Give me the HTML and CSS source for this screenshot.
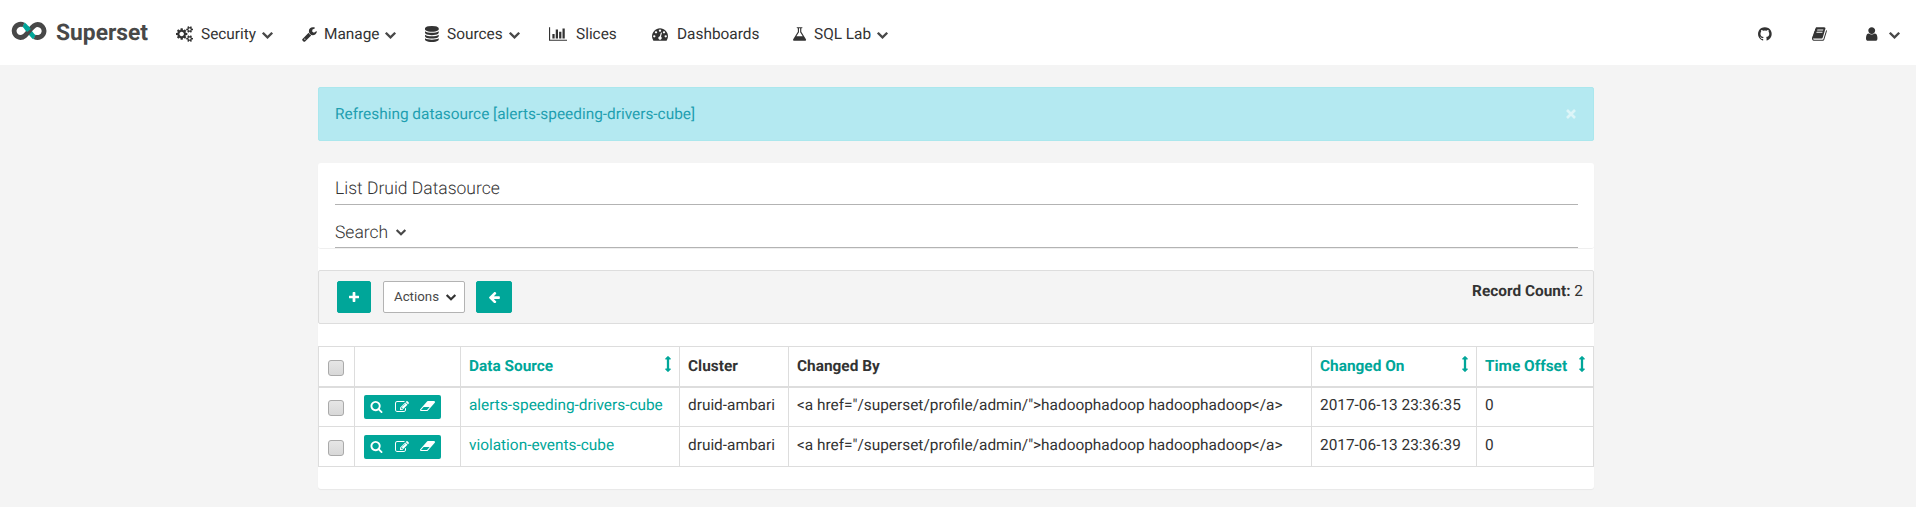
FILE: index.html
```
<!DOCTYPE html>
<html lang="en">
<head>
<meta charset="utf-8">
<title>Superset</title>
<link rel="stylesheet" href="styles.css">
</head>
<body>
<svg class="sprite" aria-hidden="true">
<symbol id="cogs" viewBox="0 0 1920 1792"><path d="M896 896q0-106-75-181t-181-75-181 75-75 181 75 181 181 75 181-75 75-181zm768 512q0-52-38-90t-90-38-90 38-38 90q0 53 37.500 90.500t90.500 37.500 90.500-37.500 37.500-90.500zm0-1024q0-52-38-90t-90-38-90 38-38 90q0 53 37.500 90.500t90.500 37.500 90.500-37.500 37.500-90.500zm-384 421v185q0 10-7 19.500t-16 10.500l-155 24q-11 35-32 76 34 48 90 115 7 11 7 20 0 12-7 19-23 30-82.500 89.500t-78.500 59.500q-11 0-21-7l-115-90q-37 19-77 31-11 108-23 155-7 24-30 24h-186q-11 0-20-7.500t-10-17.500l-23-153q-34-10-75-31l-118 89q-7 7-20 7-11 0-21-8-144-133-144-160 0-9 7-19 10-14 41-53t47-61q-23-44-35-82l-152-24q-10-1-17-9.500t-7-19.500v-185q0-10 7-19.500t16-10.500l155-24q11-35 32-76-34-48-90-115-7-11-7-20 0-12 7-20 22-30 82-89t79-59q11 0 21 7l115 90q34-18 77-32 11-108 23-154 7-24 30-24h186q11 0 20 7.500t10 17.500l23 153q34 10 75 31l118-89q8-7 20-7 11 0 21 8 144 133 144 160 0 8-7 19-12 16-42 54t-45 60q23 48 34 82l152 23q10 2 17 10.500t7 19.500zm640 533v140q0 16-149 31-12 27-30 52 51 113 51 138 0 4-4 7-122 71-124 71-8 0-46-47t-52-68q-20 2-30 2t-30-2q-14 21-52 68t-46 47q-2 0-124-71-4-3-4-7 0-25 51-138-18-25-30-52-149-15-149-31v-140q0-16 149-31 13-29 30-52-51-113-51-138 0-4 4-7 4-2 35-20t59-34 30-16q8 0 46 46.500t52 67.500q20-2 30-2t30 2q51-71 92-112l6-2q4 0 124 70 4 3 4 7 0 25-51 138 17 23 30 52 149 15 149 31zm0-1024v140q0 16-149 31-12 27-30 52 51 113 51 138 0 4-4 7-122 71-124 71-8 0-46-47t-52-68q-20 2-30 2t-30-2q-14 21-52 68t-46 47q-2 0-124-71-4-3-4-7 0-25 51-138-18-25-30-52-149-15-149-31v-140q0-16 149-31 13-29 30-52-51-113-51-138 0-4 4-7 4-2 35-20t59-34 30-16q8 0 46 46.500t52 67.500q20-2 30-2t30 2q51-71 92-112l6-2q4 0 124 70 4 3 4 7 0 25-51 138 17 23 30 52 149 15 149 31z"/></symbol>
<symbol id="wrench" viewBox="64 0 1792 1792"><path d="M448 1472q0-26-19-45t-45-19-45 19-19 45 19 45 45 19 45-19 19-45zm644-420l-682 682q-37 37-90 37-52 0-91-37l-106-108q-38-36-38-90 0-53 38-91l681-681q39 98 114.500 173.500t173.500 114.500zm634-435q0 39-23 106-47 134-164.500 217.500t-258.500 83.500q-185 0-316.500-131.500t-131.500-316.500 131.500-316.500 316.500-131.500q58 0 121.500 16.500t107.500 46.500q16 11 16 28t-16 28l-293 169v224l193 107q5-3 79-48.500t135.500-81 70.500-35.500q15 0 23.500 10t8.500 25z"/></symbol>
<symbol id="database" viewBox="128 0 1792 1792"><path d="M896 768q237 0 443-43t325-127v170q0 69-103 128t-280 93.500-385 34.500-385-34.500-280-93.500-103-128v-170q119 84 325 127t443 43zm0 768q237 0 443-43t325-127v170q0 69-103 128t-280 93.500-385 34.500-385-34.500-280-93.500-103-128v-170q119 84 325 127t443 43zm0-384q237 0 443-43t325-127v170q0 69-103 128t-280 93.500-385 34.500-385-34.500-280-93.500-103-128v-170q119 84 325 127t443 43zm0-1152q208 0 385 34.500t280 93.500 103 128v128q0 69-103 128t-280 93.500-385 34.500-385-34.500-280-93.500-103-128v-128q0-69 103-128t280-93.500 385-34.500z"/></symbol>
<symbol id="chart" viewBox="0 0 2048 1792"><path d="M640 896v512h-256v-512h256zm384-512v1024h-256v-1024h256zm1024 1152v128h-2048v-1536h128v1408h1920zm-640-896v768h-256v-768h256zm384-384v1152h-256v-1152h256z"/></symbol>
<symbol id="gauge" viewBox="0 0 1792 1792"><path d="M384 1152q0-53-37.500-90.500t-90.500-37.500-90.500 37.500-37.500 90.500 37.500 90.500 90.500 37.500 90.500-37.500 37.500-90.500zm192-448q0-53-37.500-90.500t-90.500-37.500-90.500 37.500-37.500 90.500 37.500 90.500 90.500 37.500 90.500-37.500 37.500-90.500zm428 481l101-382q6-26-7.500-48.500t-38.500-29.500-48 6.500-30 39.500l-101 382q-60 5-107 43.500t-63 98.500q-20 77 20 146t117 89 146-20 89-117q16-60-6-117t-72-91zm660-33q0-53-37.500-90.500t-90.500-37.500-90.500 37.500-37.500 90.500 37.500 90.500 90.500 37.500 90.500-37.500 37.500-90.500zm-640-640q0-53-37.500-90.500t-90.500-37.500-90.500 37.500-37.500 90.500 37.500 90.500 90.500 37.500 90.500-37.500 37.500-90.500zm448 192q0-53-37.500-90.500t-90.500-37.500-90.500 37.500-37.500 90.500 37.500 90.500 90.500 37.500 90.500-37.500 37.500-90.500zm320 448q0 261-141 483-19 29-54 29h-1402q-35 0-54-29-141-221-141-483 0-182 71-348t191-286 286-191 348-71 348 71 286 191 191 286 71 348z"/></symbol>
<symbol id="flask" viewBox="160 0 1792 1792"><path d="M1591 1448q56 89 21.500 152.500t-140.500 63.500h-1152q-106 0-140.500-63.500t21.500-152.500l503-793v-399h-64q-26 0-45-19t-19-45 19-45 45-19h512q26 0 45 19t19 45-19 45-45 19h-64v399zm-779-725l-272 429h712l-272-429-20-31v-436h-128v436z"/></symbol>
<symbol id="github" viewBox="128 0 1792 1792"><path d="M896 128q209 0 385.500 103t279.500 279.500 103 385.500q0 251-146.500 451.500t-378.500 277.500q-27 5-40-7t-13-30q0-3 .5-76.500t.5-134.500q0-97-52-142 57-6 102.500-18t94-39 81-66.500 53-105 20.500-150.500q0-119-79-206 37-91-8-204-28-9-81 11t-92 44l-38 24q-93-26-192-26t-192 26q-16-11-42.500-27t-83.500-38.500-85-13.500q-45 113-8 204-79 87-79 206 0 85 20.500 150t52.500 105 80.500 67 94 39 102.500 18q-39 36-49 103-21 10-45 15t-57 5-65.500-21.500-55.500-62.500q-19-32-48.500-52t-49.500-24l-20-3q-21 0-29 4.500t-5 11.500 9 14 13 12l7 5q22 10 43.500 38t31.500 51l10 23q13 38 44 61.500t67 30 69.500 7 55.500-3.500l23-4q0 38 .5 88.500t.5 54.500q0 18-13 30t-40 7q-232-77-378.500-277.500t-146.500-451.500q0-209 103-385.500t279.500-279.500 385.500-103z"/></symbol>
<symbol id="book" viewBox="64 0 1792 1792"><path d="M1703 478q40 57 18 129l-275 906q-19 64-76.500 107.500t-122.500 43.500h-923q-77 0-148.500-53.500t-99.500-131.500q-24-67-2-127 0-4 3-27t4-37q1-8-3-21.500t-3-19.500q2-11 8-21t16.500-23.500 16.500-23.500q23-38 45-91.500t30-91.500q3-10 .5-30t-.5-28q3-11 17-28t17-23q21-36 42-92t25-90q1-9-2.500-32t.5-28q4-13 22-30.500t22-22.500q19-26 42.500-84.500t27.500-96.500q1-8-3-25.500t-2-26.500q2-8 9-18t18-23 17-21q8-12 16.500-30.500t15-35 16-36 19.500-32 26.500-23.500 36-11.500 47.500 5.500l-1 3q38-9 51-9h761q74 0 114 56t18 130l-274 906q-36 119-71.500 153.500t-128.500 34.500h-869q-27 0-38 15-11 16-1 43 24 70 144 70h923q29 0 56-15.500t35-41.500l300-987q7-22 5-57 38 15 59 43zm-1064 2q-4 13 2 22.500t20 9.500h608q13 0 25.500-9.500t16.500-22.500l21-64q4-13-2-22.500t-20-9.500h-608q-13 0-25.500 9.500t-16.500 22.500zm-83 256q-4 13 2 22.500t20 9.500h608q13 0 25.500-9.500t16.500-22.500l21-64q4-13-2-22.500t-20-9.500h-608q-13 0-25.500 9.500t-16.500 22.500z"/></symbol>
<symbol id="user" viewBox="256 0 1792 1792"><path d="M1536 1399q0 109-62.500 187t-150.500 78h-854q-88 0-150.500-78t-62.500-187q0-85 8.500-160.500t31.500-152 58.500-131 94-89 134.500-34.500q131 128 313 128t313-128q76 0 134.500 34.500t94 89 58.500 131 31.500 152 8.500 160.500zm-256-887q0 159-112.500 271.500t-271.500 112.500-271.500-112.500-112.500-271.500 112.500-271.500 271.500-112.500 271.500 112.500 112.500 271.500z"/></symbol>
<symbol id="chev" viewBox="90 533 1612 1035"><path d="M1683 808l-742 741q-19 19-45 19t-45-19l-742-741q-19-19-19-45.500t19-45.500l166-165q19-19 45-19t45 19l531 531 531-531q19-19 45-19t45 19l166 165q19 19 19 45.500t-19 45.500z"/></symbol>
<symbol id="plus" viewBox="192 128 1408 1408"><path d="M1600 736v192q0 40-28 68t-68 28h-416v416q0 40-28 68t-68 28h-192q-40 0-68-28t-28-68v-416h-416q-40 0-68-28t-28-68v-192q0-40 28-68t68-28h416v-416q0-40 28-68t68-28h192q40 0 68 28t28 68v416h416q40 0 68 28t28 68z"/></symbol>
<symbol id="left" viewBox="64 200 1600 1500"><path d="M1664 896v128q0 53-32.500 90.500t-84.500 37.500h-704l293 294q38 36 38 90t-38 90l-75 76q-37 37-90 37-52 0-91-37l-651-652q-37-37-37-90 0-52 37-91l651-650q38-38 91-38 52 0 90 38l75 74q38 38 38 91t-38 91l-293 293h704q52 0 84.500 37.500t32.500 90.500z"/></symbol>
<symbol id="search" viewBox="64 128 1664 1664"><path d="M1216 832q0-185-131.500-316.500t-316.500-131.500-316.500 131.500-131.500 316.500 131.500 316.500 316.500 131.500 316.500-131.500 131.500-316.500zm512 832q0 52-38 90t-90 38q-54 0-90-38l-343-342q-179 124-399 124-143 0-273.500-55.500t-225-150-150-225-55.500-273.500 55.500-273.500 150-225 225-150 273.500-55.500 273.500 55.500 225 150 150 225 55.500 273.500q0 220-124 399l343 343q37 37 37 90z"/></symbol>
<symbol id="edit" viewBox="0 128 1792 1408"><path d="M888 1184l116-116-152-152-116 116v56h96v96h56zm440-720q-16-16-33 1l-350 350q-17 17-1 33t33-1l350-350q17-17 1-33zm80 594v190q0 119-84.500 203.500t-203.500 84.500h-832q-119 0-203.500-84.500t-84.500-203.500v-832q0-119 84.500-203.500t203.500-84.500h832q63 0 117 25 15 7 18 23 3 17-9 29l-49 49q-14 14-32 8-23-6-45-6h-832q-66 0-113 47t-47 113v832q0 66 47 113t113 47h832q66 0 113-47t47-113v-126q0-13 9-22l64-64q15-15 35-7t20 29zm-96-738l288 288-672 672h-288v-288zm444 132l-92 92-288-288 92-92q28-28 68-28t68 28l152 152q28 28 28 68t-28 68z"/></symbol>
<symbol id="eraser" viewBox="64 256 1920 1280"><path d="M960 1408l336-384h-768l-336 384h768zm1013-1077q15 34 9.500 71.500t-30.500 65.500l-896 1024q-38 44-96 44h-768q-38 0-69.500-20.500t-47.500-54.500q-15-34-9.500-71.500t30.500-65.500l896-1024q38-44 96-44h768q38 0 69.500 20.500t47.500 54.500z"/></symbol>
<symbol id="sort" viewBox="448 -64 640 1792"><path d="M1088 256q0 26-19 45t-45 19h-128v1024h128q26 0 45 19t19 45-19 45l-256 256q-19 19-45 19t-45-19l-256-256q-19-19-19-45t19-45 45-19h128v-1024h-128q-26 0-45-19t-19-45 19-45l256-256q19-19 45-19t45 19l256 256q19 19 19 45z"/></symbol>
</svg>

<nav class="navbar">
  <a class="brand">
    <svg class="logo" viewBox="0 0 36 22"><path class="cross" d="M12.500 4.600C14.600 5.800 16.200 8.600 18 11s3.600 5 5.600 6.300"/><path class="ring" d="M12.500 4.900A6.600 6.600 0 1 0 9.500 17.500C13 17.500 15 14.800 18 11S23.500 4.500 26.500 4.500a6.500 6.500 0 1 1-2.900 12.300"/><path class="cross" d="M15.300 7.200L18 10.600"/></svg>
    <span class="brand-name">Superset</span>
  </a>
  <ul class="menu">
    <li class="item security"><svg class="ico cogs"><use href="#cogs"/></svg><span>Security</span><svg class="chev"><use href="#chev"/></svg></li>
    <li class="item manage"><svg class="ico"><use href="#wrench"/></svg><span>Manage</span><svg class="chev"><use href="#chev"/></svg></li>
    <li class="item sources"><svg class="ico"><use href="#database"/></svg><span>Sources</span><svg class="chev"><use href="#chev"/></svg></li>
    <li class="item slices"><svg class="ico chart"><use href="#chart"/></svg><span>Slices</span></li>
    <li class="item dashboards"><svg class="ico"><use href="#gauge"/></svg><span>Dashboards</span></li>
    <li class="item lab"><svg class="ico"><use href="#flask"/></svg><span>SQL Lab</span><svg class="chev"><use href="#chev"/></svg></li>
  </ul>
  <div class="tools">
    <svg class="ico"><use href="#github"/></svg>
    <svg class="ico"><use href="#book"/></svg>
    <span class="account"><svg class="ico"><use href="#user"/></svg><svg class="chev"><use href="#chev"/></svg></span>
  </div>
</nav>

<main class="container">
  <div class="alert"><span>Refreshing datasource [alerts-speeding-drivers-cube]</span><svg class="close" viewBox="0 0 10 10"><path d="M1 1L9 9M9 1L1 9"/></svg></div>

  <section class="panel">
    <div class="filters">
      <h4 class="heading title">List Druid Datasource</h4>
      <h4 class="heading find"><span>Search</span><svg class="chev"><use href="#chev"/></svg></h4>
    </div>
    <div class="toolbar">
      <button class="btn add"><svg><use href="#plus"/></svg></button>
      <button class="btn actions"><span>Actions</span><svg class="chev"><use href="#chev"/></svg></button>
      <button class="btn back"><svg><use href="#left"/></svg></button>
      <div class="count"><b>Record Count:</b> 2</div>
    </div>
    <table class="grid">
      <colgroup><col class="c1"><col class="c2"><col class="c3"><col class="c4"><col class="c5"><col class="c6"><col class="c7"></colgroup>
      <thead><tr>
        <th><span class="check"></span></th><th></th>
        <th><div class="sortable"><span>Data Source</span><svg><use href="#sort"/></svg></div></th>
        <th>Cluster</th><th>Changed By</th>
        <th><div class="sortable"><span>Changed On</span><svg><use href="#sort"/></svg></div></th>
        <th><div class="sortable"><span>Time Offset</span><svg><use href="#sort"/></svg></div></th>
      </tr></thead>
      <tbody>
      <tr class="first">
        <td><span class="check"></span></td>
        <td><div class="row-tools"><svg class="s"><use href="#search"/></svg><svg class="e"><use href="#edit"/></svg><svg class="d"><use href="#eraser"/></svg></div></td>
        <td><a class="link">alerts-speeding-drivers-cube</a></td><td>druid-ambari</td>
        <td>&lt;a href="/superset/profile/admin/"&gt;hadoophadoop hadoophadoop&lt;/a&gt;</td>
        <td>2017-06-13 23:36:35</td><td>0</td>
      </tr>
      <tr>
        <td><span class="check"></span></td>
        <td><div class="row-tools"><svg class="s"><use href="#search"/></svg><svg class="e"><use href="#edit"/></svg><svg class="d"><use href="#eraser"/></svg></div></td>
        <td><a class="link">violation-events-cube</a></td><td>druid-ambari</td>
        <td>&lt;a href="/superset/profile/admin/"&gt;hadoophadoop hadoophadoop&lt;/a&gt;</td>
        <td>2017-06-13 23:36:39</td><td>0</td>
      </tr>
      </tbody>
    </table>
  </section>
</main>
</body>
</html>
```
FILE: styles.css
```
* { box-sizing: border-box; }
body { margin: 0; background: #f4f4f4; color: #333; font: 15.4px/22px Roboto, sans-serif; text-rendering: geometricPrecision; overflow: hidden; height: 507px; }
.sprite { position: absolute; width: 0; height: 0; }
svg { display: block; flex: none; fill: currentColor; }

.navbar { display: flex; align-items: flex-start; height: 65px; background: #fff; }
.brand { display: flex; width: 176px; padding: 20px 0 0 12px; color: #484848; }
.logo { width: 36px; height: 22px; margin-left: -1px; }
.ring, .cross { fill: none; stroke: #484848; stroke-width: 4.8; }
.cross { stroke: #00a699; }
.brand-name { margin-left: 9px; font-size: 22.8px; line-height: 26px; font-weight: 700; }
.menu { display: flex; margin: 0; padding: 23px 0 0; list-style: none; }
.item { display: flex; white-space: nowrap; }
.ico { width: 16px; height: 16px; margin-top: 3px; }
.ico.cogs { width: 17px; }
.ico.chart { width: 18px; }
.chev { width: 11px; height: 7px; margin: 9px 0 0 6px; color: #484848; }
.security { width: 126px; }
.security span { margin-left: 8px; }
.manage { width: 123px; }
.manage span { margin-left: 6px; }
.sources { width: 124px; }
.sources span { margin-left: 6px; }
.slices { width: 103px; }
.slices span { margin-left: 9px; }
.dashboards { width: 141px; }
.dashboards span { margin-left: 9px; }
.lab span { margin-left: 5px; }
.tools { display: flex; gap: 38px; margin-left: auto; padding: 23px 16px 0 0; }
.account { display: flex; }
.account .chev { margin-left: 7px; }

.container { width: 1276px; margin: 22px 0 0 318px; }
.alert { display: flex; justify-content: space-between; height: 54px; padding: 15px 17px 0 16px; border: 1px solid #abe7ed; background: #b4e9f1; border-radius: 2px; color: #1f9fb0; }
.close { width: 10px; height: 10px; margin-top: 6px; stroke: #dcf5f8; stroke-width: 2.6; }

.panel { height: 326px; margin-top: 22px; background: #fff; border-radius: 3px; box-shadow: 0 1px 1px rgba(0,0,0,.05); }
.filters { height: 86px; padding: 0 16px 0 17px; border-bottom: 1px solid #efefef; border-radius: 3px; }
.heading { display: flex; margin: 0; height: 43px; border-bottom: 1px solid #b3b3b3; font-size: 17.5px; line-height: 24px; font-weight: 300; }
.title { height: 42px; padding-top: 14px; }
.find { padding-top: 16px; }
.find .chev { width: 10px; height: 7px; margin: 8px 0 0 8px; }

.toolbar { display: flex; height: 54px; margin-top: 21px; padding: 10px 10px 0 18px; border: 1px solid #ddd; border-radius: 2px; background: #f4f4f4; }
.btn { display: flex; align-items: center; justify-content: center; height: 32px; padding: 0; border: 1px solid #00a699; border-radius: 2px; background: #00a699; color: #fff; font: 13.3px/20px Roboto, sans-serif; }
.add { width: 34px; margin-right: 12px; }
.add svg { width: 10px; height: 10px; }
.actions { width: 82px; margin-right: 11px; padding-left: 2px; border-color: #b3b3b3; background: #fff; color: #484848; }
.actions .chev { width: 10px; margin: 0 0 0 7px; color: #333; }
.back { width: 36px; }
.back svg { width: 12px; height: 11px; }
.count { margin: -1px 0 0 auto; }

.grid { width: 1276px; margin-top: 22px; table-layout: fixed; border-collapse: collapse; }
.c1 { width: 36px; } .c2 { width: 106px; } .c3 { width: 219px; } .c4 { width: 109px; } .c5 { width: 523px; } .c6 { width: 165px; } .c7 { width: 117px; }
.grid th, .grid td { height: 40px; padding: 0 8px; border: 1px solid #ddd; text-align: left; vertical-align: top; white-space: nowrap; line-height: 36px; }
.grid thead th { border-bottom-width: 2px; line-height: 38px; }
.check { display: block; width: 16px; height: 16px; margin: 13px 0 0 1px; border: 1px solid #aaa; border-radius: 3px; background: linear-gradient(#e6e6e6, #d8d8d8); }
.grid .first td { line-height: 34px; }
.first .check { margin-top: 12px; }
.sortable { display: flex; justify-content: space-between; color: #00a699; }
.sortable svg { width: 6px; height: 16px; margin-top: 9px; }
.link { color: #00a699; }
.row-tools { display: flex; width: 77px; height: 24px; margin: 8px 0 0 1px; padding: 6px 0 0 6px; border-radius: 2px; background: #00a699; color: #fff; }
.first .row-tools { margin-top: 7px; }
.row-tools .s { width: 13px; height: 12px; }
.row-tools .e { width: 14px; height: 11px; margin-left: 12px; }
.row-tools .d { width: 15px; height: 10px; margin-left: 11px; }
```
